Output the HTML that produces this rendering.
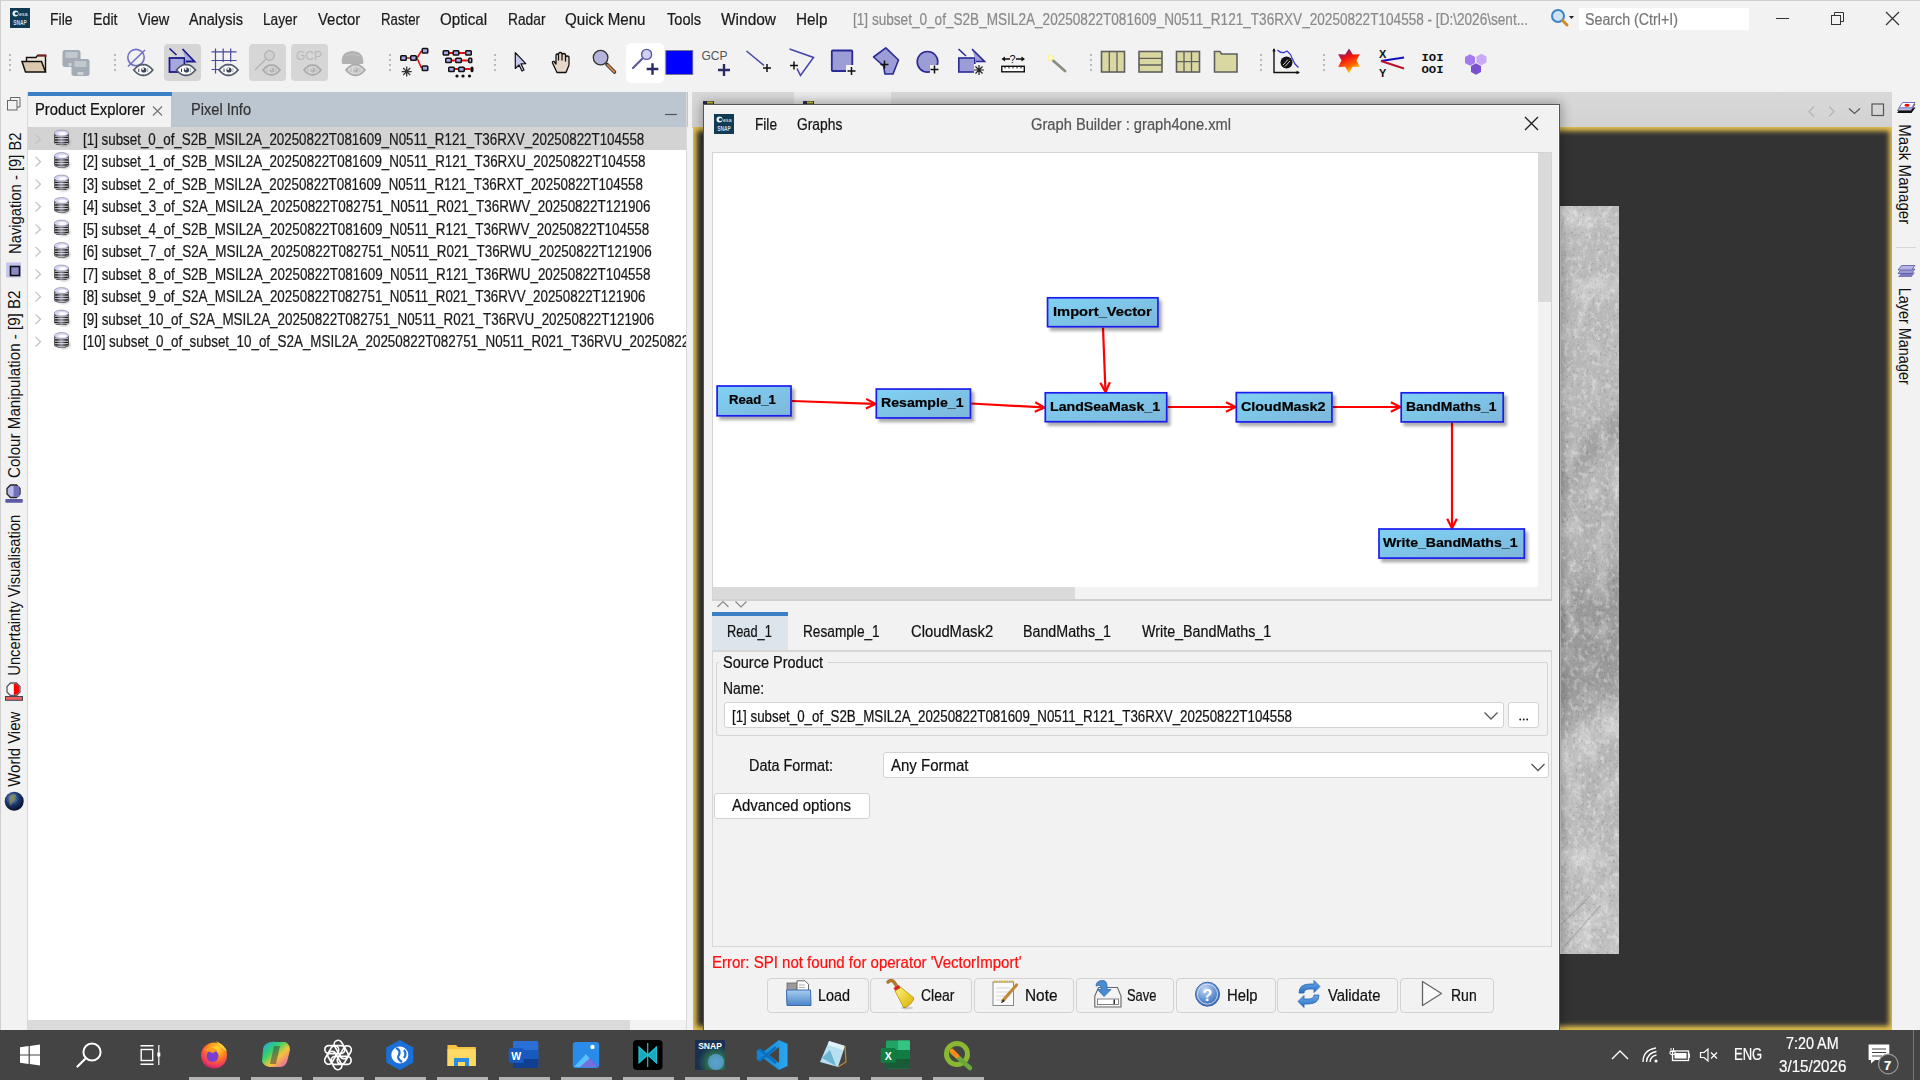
<!DOCTYPE html>
<html><head><meta charset="utf-8">
<style>
*{box-sizing:border-box;margin:0;padding:0}
html,body{width:1920px;height:1080px;overflow:hidden;background:#f2f2f2;font-family:"Liberation Sans",sans-serif;color:#000}
.a{position:absolute}
.t{position:absolute;white-space:pre}
svg.i{position:absolute;overflow:visible}
</style></head><body>
<div class="a" style="left:0px;top:0px;width:1920px;height:1px;background:#cfcfcf"></div><div class="a" style="left:0px;top:0px;width:1px;height:1030px;background:#cfcfcf"></div><svg class="i" style="left:10px;top:8px" width="20" height="20" viewBox="0 0 20 20">
<rect x="0" y="0" width="20" height="20" fill="#0f3b55"/>
<circle cx="5.5" cy="5.5" r="3" fill="#e8eef2"/><circle cx="6.5" cy="5.5" r="1.6" fill="#0f3b55"/>
<text x="9" y="7.6" font-family="Liberation Sans" font-weight="700" font-size="5.5" fill="#c8d4dc" textLength="8.5" lengthAdjust="spacingAndGlyphs">esa</text>
<text x="3.2" y="17" font-family="Liberation Sans" font-weight="700" font-size="6.5" fill="#cfd9e0" textLength="13.5" lengthAdjust="spacingAndGlyphs">SNAP</text>
</svg><div class="t" style="left:50px;top:12.00px;font-size:16px;line-height:16px;color:#1b1b1b;font-weight:400;font-family:'Liberation Sans',sans-serif;transform-origin:0 0;transform:scaleX(0.8727);-webkit-text-stroke:0.22px currentColor;">File</div><div class="t" style="left:92.5px;top:12.00px;font-size:16px;line-height:16px;color:#1b1b1b;font-weight:400;font-family:'Liberation Sans',sans-serif;transform-origin:0 0;transform:scaleX(0.8884);-webkit-text-stroke:0.22px currentColor;">Edit</div><div class="t" style="left:137.5px;top:12.00px;font-size:16px;line-height:16px;color:#1b1b1b;font-weight:400;font-family:'Liberation Sans',sans-serif;transform-origin:0 0;transform:scaleX(0.9072);-webkit-text-stroke:0.22px currentColor;">View</div><div class="t" style="left:188.6px;top:12.00px;font-size:16px;line-height:16px;color:#1b1b1b;font-weight:400;font-family:'Liberation Sans',sans-serif;transform-origin:0 0;transform:scaleX(0.9047);-webkit-text-stroke:0.22px currentColor;">Analysis</div><div class="t" style="left:262.8px;top:12.00px;font-size:16px;line-height:16px;color:#1b1b1b;font-weight:400;font-family:'Liberation Sans',sans-serif;transform-origin:0 0;transform:scaleX(0.8543);-webkit-text-stroke:0.22px currentColor;">Layer</div><div class="t" style="left:317.5px;top:12.00px;font-size:16px;line-height:16px;color:#1b1b1b;font-weight:400;font-family:'Liberation Sans',sans-serif;transform-origin:0 0;transform:scaleX(0.9303);-webkit-text-stroke:0.22px currentColor;">Vector</div><div class="t" style="left:380.8px;top:12.00px;font-size:16px;line-height:16px;color:#1b1b1b;font-weight:400;font-family:'Liberation Sans',sans-serif;transform-origin:0 0;transform:scaleX(0.8276);-webkit-text-stroke:0.22px currentColor;">Raster</div><div class="t" style="left:440px;top:12.00px;font-size:16px;line-height:16px;color:#1b1b1b;font-weight:400;font-family:'Liberation Sans',sans-serif;transform-origin:0 0;transform:scaleX(0.9438);-webkit-text-stroke:0.22px currentColor;">Optical</div><div class="t" style="left:507.5px;top:12.00px;font-size:16px;line-height:16px;color:#1b1b1b;font-weight:400;font-family:'Liberation Sans',sans-serif;transform-origin:0 0;transform:scaleX(0.8605);-webkit-text-stroke:0.22px currentColor;">Radar</div><div class="t" style="left:565px;top:12.00px;font-size:16px;line-height:16px;color:#1b1b1b;font-weight:400;font-family:'Liberation Sans',sans-serif;transform-origin:0 0;transform:scaleX(0.9429);-webkit-text-stroke:0.22px currentColor;">Quick Menu</div><div class="t" style="left:667px;top:12.00px;font-size:16px;line-height:16px;color:#1b1b1b;font-weight:400;font-family:'Liberation Sans',sans-serif;transform-origin:0 0;transform:scaleX(0.9101);-webkit-text-stroke:0.22px currentColor;">Tools</div><div class="t" style="left:721px;top:12.00px;font-size:16px;line-height:16px;color:#1b1b1b;font-weight:400;font-family:'Liberation Sans',sans-serif;transform-origin:0 0;transform:scaleX(0.9665);-webkit-text-stroke:0.22px currentColor;">Window</div><div class="t" style="left:796px;top:12.00px;font-size:16px;line-height:16px;color:#1b1b1b;font-weight:400;font-family:'Liberation Sans',sans-serif;transform-origin:0 0;transform:scaleX(0.9573);-webkit-text-stroke:0.22px currentColor;">Help</div><div class="t" style="left:852.5px;top:12.00px;font-size:16px;line-height:16px;color:#8a8a8a;font-weight:400;font-family:'Liberation Sans',sans-serif;transform-origin:0 0;transform:scaleX(0.8491);-webkit-text-stroke:0.22px currentColor;">[1] subset_0_of_S2B_MSIL2A_20250822T081609_N0511_R121_T36RXV_20250822T104558 - [D:\2026\sent...</div><svg class="i" style="left:1550px;top:8px" width="26" height="22" viewBox="0 0 26 22">
<circle cx="8" cy="8" r="6" fill="#cfe3f7" stroke="#3d83c9" stroke-width="2"/>
<path d="M12.5 12.5 L17 17" stroke="#d08a2a" stroke-width="3" stroke-linecap="round"/>
<path d="M19 8 L24 8 L21.5 11 Z" fill="#222"/></svg><div class="a" style="left:1579px;top:8px;width:170px;height:22px;background:#fff"></div><div class="t" style="left:1584.5px;top:12.00px;font-size:16px;line-height:16px;color:#777;font-weight:400;font-family:'Liberation Sans',sans-serif;transform-origin:0 0;transform:scaleX(0.8902);-webkit-text-stroke:0.22px currentColor;">Search (Ctrl+I)</div><div class="a" style="left:1776px;top:18px;width:13px;height:1px;background:#333"></div><svg class="i" style="left:1830px;top:11px" width="16" height="16" viewBox="0 0 16 16">
<rect x="1.5" y="4.5" width="9" height="9" fill="none" stroke="#333" stroke-width="1"/>
<path d="M4.5 4.5 V1.5 H13.5 V10.5 H10.5" fill="none" stroke="#333" stroke-width="1"/></svg><svg class="i" style="left:1885px;top:11px" width="16" height="16" viewBox="0 0 16 16">
<path d="M1 1 L14 14 M14 1 L1 14" stroke="#333" stroke-width="1.2"/></svg><div class="a" style="left:164px;top:44px;width:37px;height:37px;background:#d5d5d5;border-radius:4px"></div><div class="a" style="left:249px;top:44px;width:37px;height:37px;background:#d6d6d6;border-radius:4px"></div><div class="a" style="left:291px;top:44px;width:37px;height:37px;background:#d6d6d6;border-radius:4px"></div><div class="a" style="left:626px;top:42.5px;width:38px;height:40px;background:#fff;border-radius:5px"></div><svg class="i" style="left:0;top:0" width="1920" height="90" viewBox="0 0 1920 90"><circle cx="10" cy="55" r="1.1" fill="#ababab"/><circle cx="10" cy="60" r="1.1" fill="#ababab"/><circle cx="10" cy="65" r="1.1" fill="#ababab"/><circle cx="10" cy="70" r="1.1" fill="#ababab"/><circle cx="115" cy="55" r="1.1" fill="#ababab"/><circle cx="115" cy="60" r="1.1" fill="#ababab"/><circle cx="115" cy="65" r="1.1" fill="#ababab"/><circle cx="115" cy="70" r="1.1" fill="#ababab"/><circle cx="390" cy="55" r="1.1" fill="#ababab"/><circle cx="390" cy="60" r="1.1" fill="#ababab"/><circle cx="390" cy="65" r="1.1" fill="#ababab"/><circle cx="390" cy="70" r="1.1" fill="#ababab"/><circle cx="495" cy="55" r="1.1" fill="#ababab"/><circle cx="495" cy="60" r="1.1" fill="#ababab"/><circle cx="495" cy="65" r="1.1" fill="#ababab"/><circle cx="495" cy="70" r="1.1" fill="#ababab"/><circle cx="1091" cy="55" r="1.1" fill="#ababab"/><circle cx="1091" cy="60" r="1.1" fill="#ababab"/><circle cx="1091" cy="65" r="1.1" fill="#ababab"/><circle cx="1091" cy="70" r="1.1" fill="#ababab"/><circle cx="1261" cy="55" r="1.1" fill="#ababab"/><circle cx="1261" cy="60" r="1.1" fill="#ababab"/><circle cx="1261" cy="65" r="1.1" fill="#ababab"/><circle cx="1261" cy="70" r="1.1" fill="#ababab"/><circle cx="1324" cy="55" r="1.1" fill="#ababab"/><circle cx="1324" cy="60" r="1.1" fill="#ababab"/><circle cx="1324" cy="65" r="1.1" fill="#ababab"/><circle cx="1324" cy="70" r="1.1" fill="#ababab"/><path d="M26.5 63 V57.5 H36 L37.5 55.5 H45.5 V72" fill="#f0e6d8" stroke="#111" stroke-width="1.4"/><path d="M37.5 55.5 H45.5 V57" stroke="#7a2020" stroke-width="1.8" fill="none"/><path d="M22 61.5 H41.5 L45.5 72 H25.5 Z" fill="#dcc8ac" stroke="#111" stroke-width="1.5"/><rect x="62.5" y="50" width="18" height="17" rx="2.5" fill="#a3acb6"/><rect x="65.5" y="52" width="12" height="6" fill="#c2c8ce"/><rect x="68.5" y="63" width="6" height="3" fill="#cdd2d7"/><rect x="71.5" y="59" width="18" height="17" rx="2.5" fill="#a3acb6"/><rect x="74.5" y="61" width="12" height="6" fill="#c2c8ce"/><rect x="77.5" y="72" width="6" height="3" fill="#cdd2d7"/><circle cx="136" cy="57.6" r="8.2" fill="none" stroke="#7070c0" stroke-width="1.6"/><path d="M128 66.5 L145 50" stroke="#7070c0" stroke-width="1.6"/><path d="M133.8 70 Q139.025 63.9625 143.3 64.75 Q147.57500000000002 63.9625 152.8 70 Q147.57500000000002 76.0375 143.3 75.25 Q139.025 76.0375 133.8 70 Z" fill="#fff" stroke="#515b6b" stroke-width="1.8"/><circle cx="143.8" cy="70" r="2.6" fill="#3b4454"/><circle cx="143.0" cy="69.1" r="1" fill="#fff"/><path d="M138.8 68.5 V72" stroke="#3b4454" stroke-width="1"/><path d="M147.5 68 Q148.5 70 147.5 72" stroke="#9aa" stroke-width="1" fill="none"/><path d="M169.5 48.5 L176.5 55" stroke="#1a1a8a" stroke-width="1.6"/><rect x="169.5" y="58" width="15" height="14" fill="#a8a8e0" stroke="#1a1a8a" stroke-width="1.8"/><path d="M182.5 49 L194.5 61.5 L186 61.5" fill="#a8a8e0" stroke="#1a1a8a" stroke-width="1.8"/><path d="M176.5 70 Q181.725 63.9625 186 64.75 Q190.275 63.9625 195.5 70 Q190.275 76.0375 186 75.25 Q181.725 76.0375 176.5 70 Z" fill="#fff" stroke="#515b6b" stroke-width="1.8"/><circle cx="186.5" cy="70" r="2.6" fill="#3b4454"/><circle cx="185.7" cy="69.1" r="1" fill="#fff"/><path d="M181.5 68.5 V72" stroke="#3b4454" stroke-width="1"/><path d="M190.2 68 Q191.2 70 190.2 72" stroke="#9aa" stroke-width="1" fill="none"/><path d="M215.5 48.5 V73.5 M223.2 48.5 V62 M230.7 48.5 V62 M211.5 51.8 H236.5 M211.5 60.5 H236.5 M211.5 69.5 H219" stroke="#4a4a9a" stroke-width="1.2"/><path d="M219.0 70 Q224.225 63.9625 228.5 64.75 Q232.775 63.9625 238.0 70 Q232.775 76.0375 228.5 75.25 Q224.225 76.0375 219.0 70 Z" fill="#fff" stroke="#515b6b" stroke-width="1.8"/><circle cx="229.0" cy="70" r="2.6" fill="#3b4454"/><circle cx="228.2" cy="69.1" r="1" fill="#fff"/><path d="M224.0 68.5 V72" stroke="#3b4454" stroke-width="1"/><path d="M232.7 68 Q233.7 70 232.7 72" stroke="#9aa" stroke-width="1" fill="none"/><circle cx="269.5" cy="55.5" r="4.8" fill="#cfcfcf" stroke="#b0b0b0" stroke-width="1.2"/><path d="M265.5 59.5 L255 70" stroke="#b3b3b3" stroke-width="1.4"/><path d="M263.0 70 Q267.675 64.5375 271.5 65.25 Q275.325 64.5375 280.0 70 Q275.325 75.4625 271.5 74.75 Q267.675 75.4625 263.0 70 Z" fill="#d6d6d6" stroke="#a9a9a9" stroke-width="1.8"/><circle cx="272.0" cy="70" r="2.6" fill="#b5b5b5"/><circle cx="271.2" cy="69.1" r="1" fill="#d6d6d6"/><path d="M267.0 68.5 V72" stroke="#b5b5b5" stroke-width="1"/><path d="M275.7 68 Q276.7 70 275.7 72" stroke="#bbb" stroke-width="1" fill="none"/><text x="296" y="60" font-family="Liberation Sans" font-size="12" fill="#b8b8b8">GCP</text><path d="M304.0 70 Q308.675 64.5375 312.5 65.25 Q316.325 64.5375 321.0 70 Q316.325 75.4625 312.5 74.75 Q308.675 75.4625 304.0 70 Z" fill="#d6d6d6" stroke="#a9a9a9" stroke-width="1.8"/><circle cx="313.0" cy="70" r="2.6" fill="#b5b5b5"/><circle cx="312.2" cy="69.1" r="1" fill="#d6d6d6"/><path d="M308.0 68.5 V72" stroke="#b5b5b5" stroke-width="1"/><path d="M316.7 68 Q317.7 70 316.7 72" stroke="#bbb" stroke-width="1" fill="none"/><path d="M342 64 Q340 52 352 51 Q363 51 363.5 62 L363 64 Z" fill="#b2b2b2"/><path d="M346 56 Q352 53 360 56" stroke="#c5c5c5" stroke-width="1.2" fill="none"/><path d="M346.0 70 Q351.225 63.9625 355.5 64.75 Q359.775 63.9625 365.0 70 Q359.775 76.0375 355.5 75.25 Q351.225 76.0375 346.0 70 Z" fill="#d6d6d6" stroke="#a9a9a9" stroke-width="1.8"/><circle cx="356.0" cy="70" r="2.6" fill="#b5b5b5"/><circle cx="355.2" cy="69.1" r="1" fill="#d6d6d6"/><path d="M351.0 68.5 V72" stroke="#b5b5b5" stroke-width="1"/><path d="M359.7 68 Q360.7 70 359.7 72" stroke="#bbb" stroke-width="1" fill="none"/><path d="M407 58 H410 M417 58 L421.5 50.8 M417 58 L421.5 68" stroke="#e01010" stroke-width="1.6"/><rect x="400.75" y="55.75" width="5.5" height="4.5" fill="#a9a9e6" stroke="#111" stroke-width="1.5" rx="0.8"/><rect x="410.75" y="55.75" width="5.5" height="4.5" fill="#a9a9e6" stroke="#111" stroke-width="1.5" rx="0.8"/><rect x="422.25" y="48.55" width="5.5" height="4.5" fill="#a9a9e6" stroke="#111" stroke-width="1.5" rx="0.8"/><rect x="422.25" y="65.95" width="5.5" height="4.5" fill="#a9a9e6" stroke="#111" stroke-width="1.5" rx="0.8"/><path d="M401.70 71.60 L411.70 71.60 M403.16 68.06 L410.24 75.14 M406.70 66.60 L406.70 76.60 M410.24 68.06 L403.16 75.14 " stroke="#333" stroke-width="1.3"/><path d="M449 53 H465 M452 60.5 H468 M455 69 H470.5" stroke="#e01010" stroke-width="2"/><rect x="443.25" y="50.75" width="5.5" height="4.3" fill="#a9a9e6" stroke="#111" stroke-width="1.5" rx="0.8"/><rect x="453.25" y="50.75" width="5.5" height="4.3" fill="#a9a9e6" stroke="#111" stroke-width="1.5" rx="0.8"/><rect x="465.75" y="50.75" width="5.5" height="4.3" fill="#a9a9e6" stroke="#111" stroke-width="1.5" rx="0.8"/><rect x="445.75" y="58.25" width="5.5" height="4.3" fill="#a9a9e6" stroke="#111" stroke-width="1.5" rx="0.8"/><rect x="455.75" y="58.25" width="5.5" height="4.3" fill="#a9a9e6" stroke="#111" stroke-width="1.5" rx="0.8"/><rect x="468.75" y="58.25" width="3.0" height="4.3" fill="#a9a9e6" stroke="#111" stroke-width="1.5" rx="0.8"/><rect x="448.75" y="67.25" width="5.5" height="4.3" fill="#a9a9e6" stroke="#111" stroke-width="1.5" rx="0.8"/><rect x="458.75" y="67.25" width="5.5" height="4.3" fill="#a9a9e6" stroke="#111" stroke-width="1.5" rx="0.8"/><rect x="471.25" y="67.25" width="1.5" height="4.3" fill="#a9a9e6" stroke="#111" stroke-width="1.5" rx="0.8"/><circle cx="457" cy="76" r="1.6" fill="#111"/><circle cx="463" cy="76" r="1.6" fill="#111"/><circle cx="469.5" cy="76" r="1.6" fill="#111"/><path d="M515.3 52.6 V68.5 L519 65 L522 71 L524 70 L521 63.8 L525.8 63.6 Z" fill="#c8c8f0" stroke="#111" stroke-width="1.2" stroke-linejoin="round"/><path d="M557 72.5 L552.5 63 Q552 61 554 61.5 L556 64 V55 Q557 53 558.5 55 V60 V53.5 Q560.5 51.5 562 53.5 V60 V54.5 Q564 52.5 565.5 54.5 V61 V57 Q567.5 55 569 57 L569 65 L566 72.5 Z" fill="#e6d7c8" stroke="#111" stroke-width="1.3" stroke-linejoin="round"/><path d="M607 64.5 L614.5 72" stroke="#333" stroke-width="3.6" stroke-linecap="round"/><path d="M607.5 65 L614.3 71.8" stroke="#d0874a" stroke-width="2" stroke-linecap="round"/><circle cx="600.6" cy="57.6" r="7.3" fill="#b4b4dc" stroke="#333" stroke-width="1.3"/><path d="M642 59 L633 68" stroke="#5a5a9a" stroke-width="2.2" stroke-linecap="round"/><circle cx="646.6" cy="54.4" r="5" fill="#cfcff8" stroke="#5a5aa0" stroke-width="1.4"/><path d="M646.7 69 H658.3 M652.5 63.2 V74.8" stroke="#2a2a66" stroke-width="2.4"/><rect x="665.8" y="50.5" width="27" height="24" fill="#0000ff" stroke="#777" stroke-width="0.8"/><text x="701.5" y="59.8" font-family="Liberation Sans" font-size="12" fill="#555">GCP</text><path d="M718 70 H730 M724 64 V76" stroke="#2a2a66" stroke-width="2.4"/><path d="M746.5 51 L764 65.5" stroke="#4848a8" stroke-width="1.6"/><path d="M763 68 H771 M767 64 V72" stroke="#111" stroke-width="1.5"/><path d="M789.5 49 L813.5 57.5 L800.5 75.5 L797 68.5" stroke="#4848a8" stroke-width="1.6" fill="none"/><path d="M790 65.5 H798 M794 61.5 V69.5" stroke="#111" stroke-width="1.5"/><rect x="831.8" y="50.5" width="20.5" height="20.5" rx="1" fill="#9c9cd6" stroke="#2a2a96" stroke-width="1.8"/><rect x="846" y="65" width="10" height="10" fill="#f2f2f2"/><path d="M847.5 71 H855.5 M851.5 67 V75" stroke="#111" stroke-width="1.5"/><path d="M873.5 57 L885.8 47.8 L898.5 60 L893 74 L885 74 L883.5 66 Z" fill="#9c9cd6" stroke="#2a2a96" stroke-width="1.6" stroke-linejoin="round"/><path d="M880.5 64.5 H888.5 M884.5 60.5 V68.5" stroke="#111" stroke-width="1.5"/><circle cx="927.5" cy="61.8" r="10.3" fill="#9c9cd6" stroke="#2a2a96" stroke-width="1.6"/><rect x="930" y="65" width="10" height="10" fill="#f2f2f2"/><path d="M930.5 69.5 H938.5 M934.5 65.5 V73.5" stroke="#111" stroke-width="1.5"/><path d="M958.5 49 L966 56" stroke="#2a2a96" stroke-width="1.6"/><rect x="958.8" y="58" width="16" height="14" fill="#9c9cd6" stroke="#2a2a96" stroke-width="1.6"/><path d="M972 49 L984.5 61.5 L976 61.5" fill="#9c9cd6" stroke="#2a2a96" stroke-width="1.6"/><rect x="974" y="64" width="11" height="12" fill="#f2f2f2"/><path d="M974.00 70.00 L984.00 70.00 M975.46 66.46 L982.54 73.54 M979.00 65.00 L979.00 75.00 M982.54 66.46 L975.46 73.54 " stroke="#222" stroke-width="1.2"/><path d="M1003 59 H1010 M1016 59 H1023.5" stroke="#111" stroke-width="1.4"/><path d="M1001.5 59 L1005 56.5 V61.5 Z M1025 59 L1021.5 56.5 V61.5 Z" fill="#111"/><text x="1009.5" y="62.5" font-family="Liberation Sans" font-size="11" fill="#111">?</text><rect x="1001.8" y="66.3" width="22.5" height="5.5" fill="#fff" stroke="#111" stroke-width="1.4"/><path d="M1005 66.5 V68.5 M1009 66.5 V68.5 M1013 66.5 V68.5 M1017 66.5 V68.5 M1021 66.5 V68.5" stroke="#111" stroke-width="1"/><path d="M1053 60.5 L1065 71" stroke="#8a9080" stroke-width="2.8" stroke-linecap="round"/><circle cx="1050.5" cy="58" r="3.2" fill="#fff38a" opacity=".8"/><circle cx="1050.5" cy="58" r="1.5" fill="#fffbe0"/><rect x="1101.5" y="51.5" width="23" height="20.5" fill="#dad8a2" stroke="#5f5f5f" stroke-width="1.6"/><path d="M1109.3 51.5 V72 M1117 51.5 V72" stroke="#5f5f5f" stroke-width="1.3"/><rect x="1139" y="51.5" width="23" height="20.5" fill="#dad8a2" stroke="#5f5f5f" stroke-width="1.6"/><path d="M1139 58.3 H1162 M1139 65 H1162" stroke="#5f5f5f" stroke-width="1.3"/><rect x="1176.5" y="51.5" width="23" height="20.5" fill="#dad8a2" stroke="#5f5f5f" stroke-width="1.6"/><path d="M1184 51.5 V72 M1191.5 51.5 V72 M1176.5 61.7 H1199.5" stroke="#5f5f5f" stroke-width="1.3"/><path d="M1214.5 72 V51.5 H1220 L1221.5 54 H1237 V72 Z" fill="#dad8a2" stroke="#5f5f5f" stroke-width="1.6"/><path d="M1274 49 V72.5 H1299" stroke="#111" stroke-width="1.4" fill="none"/><path d="M1274 48 L1272.3 51.5 H1275.7 Z M1300 72.5 L1296.5 70.8 V74.2 Z" fill="#111"/><path d="M1277.5 50 Q1280 53 1284 52.5 L1287 51 Q1291 54 1292 58 L1295 64 L1298.5 67.5" stroke="#3a3ad0" stroke-width="1.3" fill="none"/><circle cx="1286.5" cy="62.5" r="6" fill="#111"/><path d="M1283 65 L1288 59.5 M1285 66.5 L1290 61" stroke="#ccc" stroke-width="1"/><defs><linearGradient id="stg" x1="0" y1="0" x2="0.4" y2="1"><stop offset="0" stop-color="#3020c0"/><stop offset=".45" stop-color="#f01010"/><stop offset=".8" stop-color="#ff6a00"/><stop offset="1" stop-color="#f0d020"/></linearGradient></defs><path d="M1349 48.5 L1352.8 54.5 L1359.8 54.2 L1356.5 60.5 L1359.8 67 L1352.8 66.7 L1349 73.5 L1345.2 66.7 L1338.2 67 L1341.5 60.5 L1338.2 54.2 L1345.2 54.5 Z" fill="url(#stg)"/><text x="1379" y="58" font-family="Liberation Sans" font-size="11" font-weight="700" fill="#111">X</text><text x="1379" y="76.5" font-family="Liberation Sans" font-size="11" font-weight="700" fill="#111">Y</text><path d="M1381 61 L1404 57.5" stroke="#1010c0" stroke-width="2"/><path d="M1381 61 L1404 68.5" stroke="#c01030" stroke-width="2"/><text x="1421.5" y="61" font-family="Liberation Mono" font-size="10.5" font-weight="700" fill="#111" textLength="22" lengthAdjust="spacingAndGlyphs">IOI</text><text x="1421.5" y="73" font-family="Liberation Mono" font-size="10.5" font-weight="700" fill="#111" textLength="22" lengthAdjust="spacingAndGlyphs">OOI</text><polygon points="1475.02,62.90 1470.00,65.80 1464.98,62.90 1464.98,57.10 1470.00,54.20 1475.02,57.10" fill="#a47af0"/><polygon points="1486.52,62.40 1481.50,65.30 1476.48,62.40 1476.48,56.60 1481.50,53.70 1486.52,56.60" fill="#c9aaf6"/><polygon points="1481.02,71.90 1476.00,74.80 1470.98,71.90 1470.98,66.10 1476.00,63.20 1481.02,66.10" fill="#7a4fd0"/></svg><div class="a" style="left:27px;top:92px;width:1px;height:938px;background:#d9d9d9"></div><svg class="i" style="left:0;top:0" width="28" height="1030" viewBox="0 0 28 1030">
<rect x="7.5" y="100.5" width="9.5" height="9.5" fill="#f2f2f2" stroke="#666" stroke-width="1"/>
<path d="M10.5 100.5 V97.5 H20 V107 H17" fill="none" stroke="#666" stroke-width="1"/>
<rect x="6.2" y="262.5" width="14.8" height="15" fill="#c4c4ee"/>
<rect x="10.5" y="266.5" width="9" height="9" fill="#8a8ac8" stroke="#111" stroke-width="1.6"/>
<polygon points="10.5,485 16.5,485 20,488.5 20,494 16.5,497.5 10.5,497.5 7,494 7,488.5" fill="#b8b8ec" stroke="#222" stroke-width="1.3"/>
<path d="M13.6 486 V497" stroke="#6a6ab0" stroke-width="0"/><rect x="13.6" y="486" width="5.8" height="11" fill="#7070b8"/>
<rect x="5.3" y="499" width="17.5" height="3.8" fill="#5a5aa8" rx="1"/>
<polygon points="10.5,683 16.5,683 20,686.5 20,692 16.5,695.5 10.5,695.5 7,692 7,686.5" fill="#fff" stroke="#556" stroke-width="1.3"/>
<path d="M13.8 683.8 H16.3 L19.3 686.8 V691.8 L16.3 694.8 H13.8 Z" fill="#f00"/>
<rect x="5.5" y="696.5" width="17" height="3.8" fill="#f06060" stroke="#445" stroke-width="1"/>
<defs><radialGradient id="glb" cx=".4" cy=".35" r=".7"><stop offset="0" stop-color="#7aa0d0"/><stop offset=".5" stop-color="#1c3870"/><stop offset="1" stop-color="#050a20"/></radialGradient></defs>
<circle cx="14.2" cy="801.2" r="9.5" fill="url(#glb)"/>
<path d="M9 797 Q12 793 16 795 L15 800 Q12 803 10 806 Z" fill="#8a8a50" opacity=".75"/>
</svg><div class="t" style="left:-51.31px;top:186.06px;font-size:16px;line-height:16px;color:#111;font-weight:400;font-family:'Liberation Sans',sans-serif;transform-origin:65.81px 7.24px;transform:rotate(-90deg) scaleX(0.9223);">Navigation - [9] B2</div><div class="t" style="left:-84.66px;top:376.51px;font-size:16px;line-height:16px;color:#111;font-weight:400;font-family:'Liberation Sans',sans-serif;transform-origin:99.16px 7.24px;transform:rotate(-90deg) scaleX(0.9454);">Colour Manipulation - [9] B2</div><div class="t" style="left:-72.95px;top:588.26px;font-size:16px;line-height:16px;color:#111;font-weight:400;font-family:'Liberation Sans',sans-serif;transform-origin:87.45px 7.24px;transform:rotate(-90deg) scaleX(0.9205);">Uncertainty Visualisation</div><div class="t" style="left:-25.66px;top:741.76px;font-size:16px;line-height:16px;color:#111;font-weight:400;font-family:'Liberation Sans',sans-serif;transform-origin:40.16px 7.24px;transform:rotate(-90deg) scaleX(0.9337);">World View</div><div class="a" style="left:28px;top:92px;width:659.5px;height:35px;background:#bcc6d1"></div><div class="a" style="left:28px;top:92px;width:144px;height:4px;background:#3b7fc7"></div><div class="a" style="left:28px;top:96px;width:143px;height:31px;background:#f2f2f2"></div><div class="t" style="left:35px;top:102.00px;font-size:16px;line-height:16px;color:#111;font-weight:400;font-family:'Liberation Sans',sans-serif;transform-origin:0 0;transform:scaleX(0.9230);-webkit-text-stroke:0.22px currentColor;">Product Explorer</div><svg class="i" style="left:0;top:0" width="700" height="130" viewBox="0 0 700 130"><path d="M153 106.5 L162 115.5 M162 106.5 L153 115.5" stroke="#777" stroke-width="1.3"/><path d="M665 114.5 H677" stroke="#555" stroke-width="1.2"/></svg><div class="t" style="left:190.6px;top:102.00px;font-size:16px;line-height:16px;color:#333;font-weight:400;font-family:'Liberation Sans',sans-serif;transform-origin:0 0;transform:scaleX(0.9117);-webkit-text-stroke:0.22px currentColor;">Pixel Info</div><div class="a" style="left:28px;top:127px;width:658px;height:893px;background:#fff"></div><div class="a" style="left:28px;top:127px;width:658px;height:22.5px;background:#d3d3d3"></div><svg class="i" style="left:0;top:0" width="700" height="400" viewBox="0 0 700 400"><defs><filter id="dsh"><feGaussianBlur stdDeviation="1.1"/></filter><linearGradient id="dmid" x1="0" y1="0" x2="1" y2="0"><stop offset="0" stop-color="#444"/><stop offset=".5" stop-color="#8a8a9a"/><stop offset="1" stop-color="#333"/></linearGradient></defs><path d="M35.5 134.39999999999998 L40.5 139.2 L35.5 144.0" fill="none" stroke="#c4c4c4" stroke-width="1.3"/><g transform="translate(54,129.89999999999998)"><ellipse cx="10" cy="12" rx="6.5" ry="4.5" fill="#000" opacity=".22" filter="url(#dsh)"/><path d="M0.3 3.5 V12.5 Q0.3 15.2 7.5 15.2 Q14.7 15.2 14.7 12.5 V3.5 Z" fill="#1c1c1c"/><rect x="3.5" y="5" width="8" height="9.5" fill="url(#dmid)"/><path d="M1 6.3 H14 M1 8.8 H14 M1 11.3 H14" stroke="#f4f4ff" stroke-width="0.9"/><path d="M1 13.5 Q7.5 15 14 13.5" stroke="#d8d8e8" stroke-width="0.8" fill="none"/><ellipse cx="7.5" cy="3.3" rx="7.1" ry="3.1" fill="#d6d6f4" stroke="#8a8a9a" stroke-width=".7"/><ellipse cx="8.5" cy="3.6" rx="4" ry="1.5" fill="#fff" opacity=".9"/></g><path d="M35.5 156.89999999999998 L40.5 161.7 L35.5 166.5" fill="none" stroke="#c4c4c4" stroke-width="1.3"/><g transform="translate(54,152.39999999999998)"><ellipse cx="10" cy="12" rx="6.5" ry="4.5" fill="#000" opacity=".22" filter="url(#dsh)"/><path d="M0.3 3.5 V12.5 Q0.3 15.2 7.5 15.2 Q14.7 15.2 14.7 12.5 V3.5 Z" fill="#1c1c1c"/><rect x="3.5" y="5" width="8" height="9.5" fill="url(#dmid)"/><path d="M1 6.3 H14 M1 8.8 H14 M1 11.3 H14" stroke="#f4f4ff" stroke-width="0.9"/><path d="M1 13.5 Q7.5 15 14 13.5" stroke="#d8d8e8" stroke-width="0.8" fill="none"/><ellipse cx="7.5" cy="3.3" rx="7.1" ry="3.1" fill="#d6d6f4" stroke="#8a8a9a" stroke-width=".7"/><ellipse cx="8.5" cy="3.6" rx="4" ry="1.5" fill="#fff" opacity=".9"/></g><path d="M35.5 179.39999999999998 L40.5 184.2 L35.5 189.0" fill="none" stroke="#c4c4c4" stroke-width="1.3"/><g transform="translate(54,174.89999999999998)"><ellipse cx="10" cy="12" rx="6.5" ry="4.5" fill="#000" opacity=".22" filter="url(#dsh)"/><path d="M0.3 3.5 V12.5 Q0.3 15.2 7.5 15.2 Q14.7 15.2 14.7 12.5 V3.5 Z" fill="#1c1c1c"/><rect x="3.5" y="5" width="8" height="9.5" fill="url(#dmid)"/><path d="M1 6.3 H14 M1 8.8 H14 M1 11.3 H14" stroke="#f4f4ff" stroke-width="0.9"/><path d="M1 13.5 Q7.5 15 14 13.5" stroke="#d8d8e8" stroke-width="0.8" fill="none"/><ellipse cx="7.5" cy="3.3" rx="7.1" ry="3.1" fill="#d6d6f4" stroke="#8a8a9a" stroke-width=".7"/><ellipse cx="8.5" cy="3.6" rx="4" ry="1.5" fill="#fff" opacity=".9"/></g><path d="M35.5 201.89999999999998 L40.5 206.7 L35.5 211.5" fill="none" stroke="#c4c4c4" stroke-width="1.3"/><g transform="translate(54,197.39999999999998)"><ellipse cx="10" cy="12" rx="6.5" ry="4.5" fill="#000" opacity=".22" filter="url(#dsh)"/><path d="M0.3 3.5 V12.5 Q0.3 15.2 7.5 15.2 Q14.7 15.2 14.7 12.5 V3.5 Z" fill="#1c1c1c"/><rect x="3.5" y="5" width="8" height="9.5" fill="url(#dmid)"/><path d="M1 6.3 H14 M1 8.8 H14 M1 11.3 H14" stroke="#f4f4ff" stroke-width="0.9"/><path d="M1 13.5 Q7.5 15 14 13.5" stroke="#d8d8e8" stroke-width="0.8" fill="none"/><ellipse cx="7.5" cy="3.3" rx="7.1" ry="3.1" fill="#d6d6f4" stroke="#8a8a9a" stroke-width=".7"/><ellipse cx="8.5" cy="3.6" rx="4" ry="1.5" fill="#fff" opacity=".9"/></g><path d="M35.5 224.39999999999998 L40.5 229.2 L35.5 234.0" fill="none" stroke="#c4c4c4" stroke-width="1.3"/><g transform="translate(54,219.89999999999998)"><ellipse cx="10" cy="12" rx="6.5" ry="4.5" fill="#000" opacity=".22" filter="url(#dsh)"/><path d="M0.3 3.5 V12.5 Q0.3 15.2 7.5 15.2 Q14.7 15.2 14.7 12.5 V3.5 Z" fill="#1c1c1c"/><rect x="3.5" y="5" width="8" height="9.5" fill="url(#dmid)"/><path d="M1 6.3 H14 M1 8.8 H14 M1 11.3 H14" stroke="#f4f4ff" stroke-width="0.9"/><path d="M1 13.5 Q7.5 15 14 13.5" stroke="#d8d8e8" stroke-width="0.8" fill="none"/><ellipse cx="7.5" cy="3.3" rx="7.1" ry="3.1" fill="#d6d6f4" stroke="#8a8a9a" stroke-width=".7"/><ellipse cx="8.5" cy="3.6" rx="4" ry="1.5" fill="#fff" opacity=".9"/></g><path d="M35.5 246.89999999999998 L40.5 251.7 L35.5 256.5" fill="none" stroke="#c4c4c4" stroke-width="1.3"/><g transform="translate(54,242.39999999999998)"><ellipse cx="10" cy="12" rx="6.5" ry="4.5" fill="#000" opacity=".22" filter="url(#dsh)"/><path d="M0.3 3.5 V12.5 Q0.3 15.2 7.5 15.2 Q14.7 15.2 14.7 12.5 V3.5 Z" fill="#1c1c1c"/><rect x="3.5" y="5" width="8" height="9.5" fill="url(#dmid)"/><path d="M1 6.3 H14 M1 8.8 H14 M1 11.3 H14" stroke="#f4f4ff" stroke-width="0.9"/><path d="M1 13.5 Q7.5 15 14 13.5" stroke="#d8d8e8" stroke-width="0.8" fill="none"/><ellipse cx="7.5" cy="3.3" rx="7.1" ry="3.1" fill="#d6d6f4" stroke="#8a8a9a" stroke-width=".7"/><ellipse cx="8.5" cy="3.6" rx="4" ry="1.5" fill="#fff" opacity=".9"/></g><path d="M35.5 269.4 L40.5 274.2 L35.5 279.0" fill="none" stroke="#c4c4c4" stroke-width="1.3"/><g transform="translate(54,264.9)"><ellipse cx="10" cy="12" rx="6.5" ry="4.5" fill="#000" opacity=".22" filter="url(#dsh)"/><path d="M0.3 3.5 V12.5 Q0.3 15.2 7.5 15.2 Q14.7 15.2 14.7 12.5 V3.5 Z" fill="#1c1c1c"/><rect x="3.5" y="5" width="8" height="9.5" fill="url(#dmid)"/><path d="M1 6.3 H14 M1 8.8 H14 M1 11.3 H14" stroke="#f4f4ff" stroke-width="0.9"/><path d="M1 13.5 Q7.5 15 14 13.5" stroke="#d8d8e8" stroke-width="0.8" fill="none"/><ellipse cx="7.5" cy="3.3" rx="7.1" ry="3.1" fill="#d6d6f4" stroke="#8a8a9a" stroke-width=".7"/><ellipse cx="8.5" cy="3.6" rx="4" ry="1.5" fill="#fff" opacity=".9"/></g><path d="M35.5 291.9 L40.5 296.7 L35.5 301.5" fill="none" stroke="#c4c4c4" stroke-width="1.3"/><g transform="translate(54,287.4)"><ellipse cx="10" cy="12" rx="6.5" ry="4.5" fill="#000" opacity=".22" filter="url(#dsh)"/><path d="M0.3 3.5 V12.5 Q0.3 15.2 7.5 15.2 Q14.7 15.2 14.7 12.5 V3.5 Z" fill="#1c1c1c"/><rect x="3.5" y="5" width="8" height="9.5" fill="url(#dmid)"/><path d="M1 6.3 H14 M1 8.8 H14 M1 11.3 H14" stroke="#f4f4ff" stroke-width="0.9"/><path d="M1 13.5 Q7.5 15 14 13.5" stroke="#d8d8e8" stroke-width="0.8" fill="none"/><ellipse cx="7.5" cy="3.3" rx="7.1" ry="3.1" fill="#d6d6f4" stroke="#8a8a9a" stroke-width=".7"/><ellipse cx="8.5" cy="3.6" rx="4" ry="1.5" fill="#fff" opacity=".9"/></g><path d="M35.5 314.4 L40.5 319.2 L35.5 324.0" fill="none" stroke="#c4c4c4" stroke-width="1.3"/><g transform="translate(54,309.9)"><ellipse cx="10" cy="12" rx="6.5" ry="4.5" fill="#000" opacity=".22" filter="url(#dsh)"/><path d="M0.3 3.5 V12.5 Q0.3 15.2 7.5 15.2 Q14.7 15.2 14.7 12.5 V3.5 Z" fill="#1c1c1c"/><rect x="3.5" y="5" width="8" height="9.5" fill="url(#dmid)"/><path d="M1 6.3 H14 M1 8.8 H14 M1 11.3 H14" stroke="#f4f4ff" stroke-width="0.9"/><path d="M1 13.5 Q7.5 15 14 13.5" stroke="#d8d8e8" stroke-width="0.8" fill="none"/><ellipse cx="7.5" cy="3.3" rx="7.1" ry="3.1" fill="#d6d6f4" stroke="#8a8a9a" stroke-width=".7"/><ellipse cx="8.5" cy="3.6" rx="4" ry="1.5" fill="#fff" opacity=".9"/></g><path d="M35.5 336.9 L40.5 341.7 L35.5 346.5" fill="none" stroke="#c4c4c4" stroke-width="1.3"/><g transform="translate(54,332.4)"><ellipse cx="10" cy="12" rx="6.5" ry="4.5" fill="#000" opacity=".22" filter="url(#dsh)"/><path d="M0.3 3.5 V12.5 Q0.3 15.2 7.5 15.2 Q14.7 15.2 14.7 12.5 V3.5 Z" fill="#1c1c1c"/><rect x="3.5" y="5" width="8" height="9.5" fill="url(#dmid)"/><path d="M1 6.3 H14 M1 8.8 H14 M1 11.3 H14" stroke="#f4f4ff" stroke-width="0.9"/><path d="M1 13.5 Q7.5 15 14 13.5" stroke="#d8d8e8" stroke-width="0.8" fill="none"/><ellipse cx="7.5" cy="3.3" rx="7.1" ry="3.1" fill="#d6d6f4" stroke="#8a8a9a" stroke-width=".7"/><ellipse cx="8.5" cy="3.6" rx="4" ry="1.5" fill="#fff" opacity=".9"/></g></svg><div class="t" style="left:82.5px;top:132.00px;font-size:16px;line-height:16px;color:#1a1a1a;font-weight:400;font-family:'Liberation Sans',sans-serif;transform-origin:0 0;transform:scaleX(0.8349);-webkit-text-stroke:0.22px currentColor;">[1] subset_0_of_S2B_MSIL2A_20250822T081609_N0511_R121_T36RXV_20250822T104558</div><div class="t" style="left:82.5px;top:154.00px;font-size:16px;line-height:16px;color:#1a1a1a;font-weight:400;font-family:'Liberation Sans',sans-serif;transform-origin:0 0;transform:scaleX(0.8357);-webkit-text-stroke:0.22px currentColor;">[2] subset_1_of_S2B_MSIL2A_20250822T081609_N0511_R121_T36RXU_20250822T104558</div><div class="t" style="left:82.5px;top:177.00px;font-size:16px;line-height:16px;color:#1a1a1a;font-weight:400;font-family:'Liberation Sans',sans-serif;transform-origin:0 0;transform:scaleX(0.8341);-webkit-text-stroke:0.22px currentColor;">[3] subset_2_of_S2B_MSIL2A_20250822T081609_N0511_R121_T36RXT_20250822T104558</div><div class="t" style="left:82.5px;top:199.00px;font-size:16px;line-height:16px;color:#1a1a1a;font-weight:400;font-family:'Liberation Sans',sans-serif;transform-origin:0 0;transform:scaleX(0.8390);-webkit-text-stroke:0.22px currentColor;">[4] subset_3_of_S2A_MSIL2A_20250822T082751_N0511_R021_T36RWV_20250822T121906</div><div class="t" style="left:82.5px;top:222.00px;font-size:16px;line-height:16px;color:#1a1a1a;font-weight:400;font-family:'Liberation Sans',sans-serif;transform-origin:0 0;transform:scaleX(0.8372);-webkit-text-stroke:0.22px currentColor;">[5] subset_4_of_S2B_MSIL2A_20250822T081609_N0511_R121_T36RWV_20250822T104558</div><div class="t" style="left:82.5px;top:244.00px;font-size:16px;line-height:16px;color:#1a1a1a;font-weight:400;font-family:'Liberation Sans',sans-serif;transform-origin:0 0;transform:scaleX(0.8398);-webkit-text-stroke:0.22px currentColor;">[6] subset_7_of_S2A_MSIL2A_20250822T082751_N0511_R021_T36RWU_20250822T121906</div><div class="t" style="left:82.5px;top:267.00px;font-size:16px;line-height:16px;color:#1a1a1a;font-weight:400;font-family:'Liberation Sans',sans-serif;transform-origin:0 0;transform:scaleX(0.8379);-webkit-text-stroke:0.22px currentColor;">[7] subset_8_of_S2B_MSIL2A_20250822T081609_N0511_R121_T36RWU_20250822T104558</div><div class="t" style="left:82.5px;top:289.00px;font-size:16px;line-height:16px;color:#1a1a1a;font-weight:400;font-family:'Liberation Sans',sans-serif;transform-origin:0 0;transform:scaleX(0.8371);-webkit-text-stroke:0.22px currentColor;">[8] subset_9_of_S2A_MSIL2A_20250822T082751_N0511_R021_T36RVV_20250822T121906</div><div class="t" style="left:82.5px;top:312.00px;font-size:16px;line-height:16px;color:#1a1a1a;font-weight:400;font-family:'Liberation Sans',sans-serif;transform-origin:0 0;transform:scaleX(0.8379);-webkit-text-stroke:0.22px currentColor;">[9] subset_10_of_S2A_MSIL2A_20250822T082751_N0511_R021_T36RVU_20250822T121906</div><div class="a" style="left:28px;top:330px;width:658px;height:24px;overflow:hidden"><div class="t" style="left:54.5px;top:4.00px;font-size:16px;line-height:16px;color:#1a1a1a;font-weight:400;font-family:'Liberation Sans',sans-serif;transform-origin:0 0;transform:scaleX(0.8379);-webkit-text-stroke:0.22px currentColor;">[10] subset_0_of_subset_10_of_S2A_MSIL2A_20250822T082751_N0511_R021_T36RVU_20250822T121906</div></div><div class="a" style="left:28px;top:1020px;width:658px;height:10px;background:#f2f2f2"></div><div class="a" style="left:28px;top:1020px;width:602px;height:10px;background:#dadada"></div><div class="a" style="left:686px;top:92px;width:1px;height:938px;background:#d8d8d8"></div><div class="a" style="left:692px;top:92px;width:1200px;height:36px;background:linear-gradient(#d9d9d9,#d2d2d2)"></div><div class="a" style="left:794px;top:92px;width:97px;height:13px;background:linear-gradient(#ececec,#e2e2e2)"></div><svg class="i" style="left:0;top:0" width="1920" height="140" viewBox="0 0 1920 140">
<rect x="703" y="101" width="11" height="4" fill="#2a2a50"/><rect x="707" y="101.5" width="6" height="2" fill="#c8c820"/>
<rect x="803" y="101" width="11" height="4" fill="#2a2a50"/><rect x="807" y="101.5" width="6" height="2" fill="#c8c820"/>
<path d="M1814 106.5 L1809 111.5 L1814 116.5 M1829 106.5 L1834 111.5 L1829 116.5" fill="none" stroke="#b4b4b4" stroke-width="1.2"/>
<path d="M1849 108.5 L1854.5 113.5 L1860 108.5" fill="none" stroke="#555" stroke-width="1.2"/>
<rect x="1872" y="104" width="11.5" height="11.5" fill="none" stroke="#555" stroke-width="1.2"/>
</svg><div class="a" style="left:693px;top:127px;width:1199px;height:903px;background:#e6c24e;overflow:hidden"><div class="a" style="left:3.5px;top:4px;width:1192px;height:895px;background:#333;filter:blur(2.4px)"></div></div><svg class="i" style="left:1560px;top:206px" width="59" height="748" viewBox="0 0 59 748">
<defs>
<filter id="sat" x="0" y="0" width="100%" height="100%">
<feTurbulence type="fractalNoise" baseFrequency="0.22 0.18" numOctaves="3" seed="3" result="n"/>
<feColorMatrix in="n" type="matrix" values="0 0 0 0 1  0 0 0 0 1  0 0 0 0 1  2.4 0 0 0 -1.15"/>
</filter>
<filter id="sat2" x="0" y="0" width="100%" height="100%">
<feTurbulence type="fractalNoise" baseFrequency="0.45 0.35" numOctaves="2" seed="11" result="n"/>
<feColorMatrix in="n" type="matrix" values="0 0 0 0 0  0 0 0 0 0  0 0 0 0 0  0 2.4 0 0 -1.4"/>
</filter>
<filter id="blob" x="0" y="0" width="100%" height="100%">
<feTurbulence type="fractalNoise" baseFrequency="0.06 0.03" numOctaves="2" seed="5" result="n"/>
<feColorMatrix in="n" type="matrix" values="0 0 0 0 1  0 0 0 0 1  0 0 0 0 1  3.5 0 0 0 -1.75"/>
</filter>
<filter id="bl6"><feGaussianBlur stdDeviation="5"/></filter>
<linearGradient id="satg" x1="0" y1="0" x2="0" y2="1">
<stop offset="0" stop-color="#bcbcbc"/><stop offset=".3" stop-color="#b6b6b6"/><stop offset=".47" stop-color="#b0b0b0"/>
<stop offset=".52" stop-color="#a6a6a6"/><stop offset=".66" stop-color="#a2a2a2"/><stop offset=".72" stop-color="#b4b4b4"/>
<stop offset=".88" stop-color="#bababa"/><stop offset="1" stop-color="#c0c0c0"/></linearGradient>
<clipPath id="satc"><rect width="59" height="748"/></clipPath>
</defs>
<g clip-path="url(#satc)">
<rect width="59" height="748" fill="url(#satg)"/>
<path d="M-5 270 Q30 220 70 200 L70 225 Q30 250 -5 300 Z" fill="#999" filter="url(#bl6)" opacity=".7"/><path d="M-5 400 Q30 370 70 360 L70 470 Q30 480 -5 500 Z" fill="#989898" filter="url(#bl6)" opacity=".85"/>
<path d="M-5 540 L70 480 L70 520 L-5 580 Z" fill="#cacaca" filter="url(#bl6)" opacity=".6"/><path d="M-5 520 Q20 700 70 740" stroke="#d8d8d8" stroke-width="6" fill="none" filter="url(#bl6)" opacity=".5"/>
<rect y="0" width="59" height="748" filter="url(#blob)" opacity=".3"/>
<rect width="59" height="748" filter="url(#sat)" opacity=".45"/>
<rect width="59" height="748" filter="url(#sat2)" opacity=".22"/>
<path d="M5 740 L40 700 M0 720 L30 690" stroke="#666" stroke-width="1.2" opacity=".25"/>
</g>
<rect x="0" y="0" width="1" height="748" fill="#d0d0d0"/>
</svg><div class="a" style="left:1892px;top:92px;width:28px;height:938px;background:#f2f2f2"></div><div class="a" style="left:1896px;top:247px;width:20px;height:1px;background:#d6d6d6"></div><svg class="i" style="left:0;top:0" width="1920" height="300" viewBox="0 0 1920 300">
<path d="M1897 113 L1901 107.5 H1915.5 L1911.5 113 Z" fill="#111"/>
<path d="M1897.5 110.5 L1901.5 104.5 H1915 L1911 110.5 Z" fill="#b8b8e8" stroke="#555" stroke-width=".8"/>
<path d="M1899 107.8 L1902.5 102.5 H1915 L1911.5 107.8 Z" fill="#fff" stroke="#7070c0" stroke-width="1"/>
<ellipse cx="1907" cy="105.2" rx="2.6" ry="1.5" fill="#f00"/>
<path d="M1898 277 L1901.5 272.5 H1915 L1911.5 277 Z" fill="#7a7abc"/>
<path d="M1898 273.5 L1901.5 269 H1915 L1911.5 273.5 Z" fill="#9a9ad6" stroke="#5a5a9a" stroke-width=".8"/>
<path d="M1898 270 L1901.5 265.5 H1915 L1911.5 270 Z" fill="#b4b4ea" stroke="#5a5a9a" stroke-width=".8"/>
</svg><div class="t" style="left:1852.09px;top:167.16px;font-size:16px;line-height:16px;color:#111;font-weight:400;font-family:'Liberation Sans',sans-serif;transform-origin:52.91px 7.24px;transform:rotate(90deg) scaleX(0.9449);">Mask Manager</div><div class="t" style="left:1851.19px;top:329.26px;font-size:16px;line-height:16px;color:#111;font-weight:400;font-family:'Liberation Sans',sans-serif;transform-origin:53.81px 7.24px;transform:rotate(90deg) scaleX(0.9013);">Layer Manager</div><div class="a" style="left:703px;top:104px;width:857px;height:926px;background:#f2f2f2;border:1px solid #555;border-bottom:none;box-shadow:0 0 10px 2px rgba(0,0,0,.28)"></div><div class="a" style="left:704px;top:105px;width:855px;height:1px;background:#fafafa"></div><div class="a" style="left:1558px;top:105px;width:1px;height:925px;background:#fafafa"></div><svg class="i" style="left:714px;top:114px" width="20" height="20" viewBox="0 0 20 20">
<rect x="0" y="0" width="20" height="20" fill="#0f3b55"/>
<circle cx="5.5" cy="5.5" r="3" fill="#e8eef2"/><circle cx="6.5" cy="5.5" r="1.6" fill="#0f3b55"/>
<text x="9" y="7.6" font-family="Liberation Sans" font-weight="700" font-size="5.5" fill="#c8d4dc" textLength="8.5" lengthAdjust="spacingAndGlyphs">esa</text>
<text x="3.2" y="17" font-family="Liberation Sans" font-weight="700" font-size="6.5" fill="#cfd9e0" textLength="13.5" lengthAdjust="spacingAndGlyphs">SNAP</text>
</svg><div class="t" style="left:754.7px;top:117.00px;font-size:16px;line-height:16px;color:#111;font-weight:400;font-family:'Liberation Sans',sans-serif;transform-origin:0 0;transform:scaleX(0.8533);-webkit-text-stroke:0.22px currentColor;">File</div><div class="t" style="left:797.2px;top:117.00px;font-size:16px;line-height:16px;color:#111;font-weight:400;font-family:'Liberation Sans',sans-serif;transform-origin:0 0;transform:scaleX(0.8634);-webkit-text-stroke:0.22px currentColor;">Graphs</div><div class="t" style="left:1030.8px;top:117.00px;font-size:16px;line-height:16px;color:#555;font-weight:400;font-family:'Liberation Sans',sans-serif;transform-origin:0 0;transform:scaleX(0.9178);-webkit-text-stroke:0.22px currentColor;">Graph Builder : graph4one.xml</div><svg class="i" style="left:0;top:0" width="1600" height="140" viewBox="0 0 1600 140"><path d="M1525 117 L1538 130 M1538 117 L1525 130" stroke="#222" stroke-width="1.4"/></svg><div class="a" style="left:711.5px;top:151.5px;width:840px;height:449px;background:#fff;border:1px solid #d4d4d4"></div><div class="a" style="left:1538px;top:152.5px;width:12.5px;height:435px;background:#f2f2f2"></div><div class="a" style="left:1538px;top:152.5px;width:12.5px;height:149px;background:#dadada"></div><div class="a" style="left:712.5px;top:586.7px;width:838px;height:13px;background:#f2f2f2"></div><div class="a" style="left:712.5px;top:586.7px;width:362.7px;height:12.5px;background:#dadada"></div><div class="a" style="left:712.5px;top:599px;width:838px;height:1.5px;background:#d0d0d0"></div><svg class="i" style="left:0;top:0" width="1600" height="600" viewBox="0 0 1600 600"><defs><linearGradient id="ng" x1="0" y1="0" x2="1" y2="1"><stop offset="0" stop-color="#7fd2f4"/><stop offset="1" stop-color="#7db6da"/></linearGradient><filter id="ns" x="-20%" y="-30%" width="140%" height="170%"><feGaussianBlur stdDeviation="1.4"/></filter></defs><path d="M791.8 401 L874.5006417167866 403.9641807066949" stroke="#ff0000" stroke-width="2.2"/><path d="M865.83 408.46 L875.5 404 L866.18 398.86" fill="none" stroke="#ff0000" stroke-width="2.2" stroke-linejoin="miter"/><path d="M971.25 403.5 L1043.5014876636822 407.4454737290748" stroke="#ff0000" stroke-width="2.2"/><path d="M1034.75 411.77 L1044.5 407.5 L1035.28 402.19" fill="none" stroke="#ff0000" stroke-width="2.2" stroke-linejoin="miter"/><path d="M1103 327.5 L1105.461269391918 391.00075031148486" stroke="#ff0000" stroke-width="2.2"/><path d="M1100.34 382.69 L1105.5 392 L1109.93 382.32" fill="none" stroke="#ff0000" stroke-width="2.2" stroke-linejoin="miter"/><path d="M1167.5 407 L1234.5 407.0" stroke="#ff0000" stroke-width="2.2"/><path d="M1226.00 411.80 L1235.5 407 L1226.00 402.20" fill="none" stroke="#ff0000" stroke-width="2.2" stroke-linejoin="miter"/><path d="M1332.7 407 L1399.4 407.0" stroke="#ff0000" stroke-width="2.2"/><path d="M1390.90 411.80 L1400.4 407 L1390.90 402.20" fill="none" stroke="#ff0000" stroke-width="2.2" stroke-linejoin="miter"/><path d="M1452 422.7 L1452.0 527.2" stroke="#ff0000" stroke-width="2.2"/><path d="M1447.20 518.70 L1452 528.2 L1456.80 518.70" fill="none" stroke="#ff0000" stroke-width="2.2" stroke-linejoin="miter"/><rect x="719.3" y="388.7" width="75.5" height="31.400000000000034" fill="#000" opacity=".32" filter="url(#ns)"/><rect x="717.0999999999999" y="386.0" width="73.9" height="29.800000000000033" fill="url(#ng)" stroke="#1c1cf0" stroke-width="1.7"/><rect x="878.5" y="391.75" width="95.75" height="30.5" fill="#000" opacity=".32" filter="url(#ns)"/><rect x="876.3" y="389.05" width="94.15" height="28.9" fill="url(#ng)" stroke="#1c1cf0" stroke-width="1.7"/><rect x="1047.5" y="395.5" width="123.0" height="30.5" fill="#000" opacity=".32" filter="url(#ns)"/><rect x="1045.3" y="392.8" width="121.4" height="28.9" fill="url(#ng)" stroke="#1c1cf0" stroke-width="1.7"/><rect x="1049.75" y="300.5" width="112.0" height="30.5" fill="#000" opacity=".32" filter="url(#ns)"/><rect x="1047.55" y="297.8" width="110.4" height="28.9" fill="url(#ng)" stroke="#1c1cf0" stroke-width="1.7"/><rect x="1238.5" y="395.3" width="97.20000000000005" height="30.899999999999977" fill="#000" opacity=".32" filter="url(#ns)"/><rect x="1236.3" y="392.6" width="95.60000000000005" height="29.299999999999976" fill="url(#ng)" stroke="#1c1cf0" stroke-width="1.7"/><rect x="1403.4" y="395.5" width="103.59999999999991" height="30.69999999999999" fill="#000" opacity=".32" filter="url(#ns)"/><rect x="1401.2" y="392.8" width="101.99999999999991" height="29.099999999999987" fill="url(#ng)" stroke="#1c1cf0" stroke-width="1.7"/><rect x="1381.2" y="531.7" width="146.89999999999986" height="30.699999999999932" fill="#000" opacity=".32" filter="url(#ns)"/><rect x="1379.0" y="529.0" width="145.29999999999987" height="29.09999999999993" fill="url(#ng)" stroke="#1c1cf0" stroke-width="1.7"/></svg><div class="t" style="left:728.75px;top:393.00px;font-size:13.5px;line-height:13.5px;color:#000;font-weight:700;font-family:'Liberation Sans',sans-serif;transform-origin:0 0;transform:scaleX(0.9754);-webkit-text-stroke:0.22px currentColor;">Read_1</div><div class="t" style="left:881.25px;top:396.00px;font-size:13.5px;line-height:13.5px;color:#000;font-weight:700;font-family:'Liberation Sans',sans-serif;transform-origin:0 0;transform:scaleX(1.0468);-webkit-text-stroke:0.22px currentColor;">Resample_1</div><div class="t" style="left:1050px;top:400.00px;font-size:13.5px;line-height:13.5px;color:#000;font-weight:700;font-family:'Liberation Sans',sans-serif;transform-origin:0 0;transform:scaleX(1.0470);-webkit-text-stroke:0.22px currentColor;">LandSeaMask_1</div><div class="t" style="left:1052.5px;top:305.00px;font-size:13.5px;line-height:13.5px;color:#000;font-weight:700;font-family:'Liberation Sans',sans-serif;transform-origin:0 0;transform:scaleX(1.0878);-webkit-text-stroke:0.22px currentColor;">Import_Vector</div><div class="t" style="left:1241.1px;top:400.00px;font-size:13.5px;line-height:13.5px;color:#000;font-weight:700;font-family:'Liberation Sans',sans-serif;transform-origin:0 0;transform:scaleX(1.0625);-webkit-text-stroke:0.22px currentColor;">CloudMask2</div><div class="t" style="left:1406.2px;top:400.00px;font-size:13.5px;line-height:13.5px;color:#000;font-weight:700;font-family:'Liberation Sans',sans-serif;transform-origin:0 0;transform:scaleX(1.0310);-webkit-text-stroke:0.22px currentColor;">BandMaths_1</div><div class="t" style="left:1383.3px;top:536.00px;font-size:13.5px;line-height:13.5px;color:#000;font-weight:700;font-family:'Liberation Sans',sans-serif;transform-origin:0 0;transform:scaleX(1.0443);-webkit-text-stroke:0.22px currentColor;">Write_BandMaths_1</div><svg class="i" style="left:0;top:0" width="1600" height="620" viewBox="0 0 1600 620"><path d="M717.5 607 L723 601.5 L728.5 607 M735.5 601.5 L741 607 L746.5 601.5" fill="none" stroke="#888" stroke-width="1.2"/></svg><div class="a" style="left:712px;top:612px;width:75.6px;height:3.5px;background:#3b7fc7"></div><div class="a" style="left:712px;top:615.5px;width:75.6px;height:35.5px;background:#dce4ec"></div><div class="a" style="left:711.5px;top:650px;width:840px;height:2px;background:#d6d6d6"></div><div class="t" style="left:727px;top:624.00px;font-size:16px;line-height:16px;color:#111;font-weight:400;font-family:'Liberation Sans',sans-serif;transform-origin:0 0;transform:scaleX(0.7993);-webkit-text-stroke:0.22px currentColor;">Read_1</div><div class="t" style="left:803px;top:624.00px;font-size:16px;line-height:16px;color:#111;font-weight:400;font-family:'Liberation Sans',sans-serif;transform-origin:0 0;transform:scaleX(0.8539);-webkit-text-stroke:0.22px currentColor;">Resample_1</div><div class="t" style="left:910.6px;top:624.00px;font-size:16px;line-height:16px;color:#111;font-weight:400;font-family:'Liberation Sans',sans-serif;transform-origin:0 0;transform:scaleX(0.9231);-webkit-text-stroke:0.22px currentColor;">CloudMask2</div><div class="t" style="left:1023px;top:624.00px;font-size:16px;line-height:16px;color:#111;font-weight:400;font-family:'Liberation Sans',sans-serif;transform-origin:0 0;transform:scaleX(0.8913);-webkit-text-stroke:0.22px currentColor;">BandMaths_1</div><div class="t" style="left:1141.8px;top:624.00px;font-size:16px;line-height:16px;color:#111;font-weight:400;font-family:'Liberation Sans',sans-serif;transform-origin:0 0;transform:scaleX(0.8931);-webkit-text-stroke:0.22px currentColor;">Write_BandMaths_1</div><div class="a" style="left:711.5px;top:651px;width:840px;height:295.5px;border:1px solid #d6d6d6;border-top:none"></div><div class="a" style="left:715.6px;top:662px;width:832.2px;height:74.2px;border:1px solid #d4d4d4;border-radius:2px"></div><div class="a" style="left:719px;top:656px;width:109px;height:12px;background:#f2f2f2"></div><div class="t" style="left:723px;top:655.00px;font-size:16px;line-height:16px;color:#111;font-weight:400;font-family:'Liberation Sans',sans-serif;transform-origin:0 0;transform:scaleX(0.9068);-webkit-text-stroke:0.22px currentColor;">Source Product</div><div class="t" style="left:723px;top:681.00px;font-size:16px;line-height:16px;color:#111;font-weight:400;font-family:'Liberation Sans',sans-serif;transform-origin:0 0;transform:scaleX(0.8700);-webkit-text-stroke:0.22px currentColor;">Name:</div><div class="a" style="left:723.5px;top:702.4px;width:780px;height:26px;background:#fff;border:1px solid #d2d2d2;border-radius:3px"></div><div class="t" style="left:732.3px;top:709.00px;font-size:16px;line-height:16px;color:#111;font-weight:400;font-family:'Liberation Sans',sans-serif;transform-origin:0 0;transform:scaleX(0.8330);-webkit-text-stroke:0.22px currentColor;">[1] subset_0_of_S2B_MSIL2A_20250822T081609_N0511_R121_T36RXV_20250822T104558</div><div class="a" style="left:1507.9px;top:702.4px;width:31.6px;height:26px;background:#fff;border:1px solid #d2d2d2;border-radius:3px"></div><div class="t" style="left:749.3px;top:758.00px;font-size:16px;line-height:16px;color:#111;font-weight:400;font-family:'Liberation Sans',sans-serif;transform-origin:0 0;transform:scaleX(0.8997);-webkit-text-stroke:0.22px currentColor;">Data Format:</div><div class="a" style="left:883.4px;top:752.3px;width:666px;height:26px;background:#fff;border:1px solid #d2d2d2;border-radius:3px"></div><div class="t" style="left:891.3px;top:758.00px;font-size:16px;line-height:16px;color:#111;font-weight:400;font-family:'Liberation Sans',sans-serif;transform-origin:0 0;transform:scaleX(0.9373);-webkit-text-stroke:0.22px currentColor;">Any Format</div><svg class="i" style="left:0;top:0" width="1600" height="800" viewBox="0 0 1600 800"><path d="M1484.5 712.5 L1491 719 L1497.5 712.5" fill="none" stroke="#555" stroke-width="1.3"/><circle cx="1520.2" cy="719.5" r=".9" fill="#111"/><circle cx="1523.7" cy="719.5" r=".9" fill="#111"/><circle cx="1527.2" cy="719.5" r=".9" fill="#111"/><path d="M1531.5 764 L1538 770.5 L1544.5 764" fill="none" stroke="#555" stroke-width="1.3"/></svg><div class="a" style="left:713.7px;top:792.6px;width:156px;height:26.5px;background:#fff;border:1px solid #d2d2d2;border-radius:3px"></div><div class="t" style="left:732px;top:798.00px;font-size:16px;line-height:16px;color:#111;font-weight:400;font-family:'Liberation Sans',sans-serif;transform-origin:0 0;transform:scaleX(0.9355);-webkit-text-stroke:0.22px currentColor;">Advanced options</div><div class="t" style="left:711.5px;top:955.00px;font-size:16px;line-height:16px;color:#ff1010;font-weight:400;font-family:'Liberation Sans',sans-serif;transform-origin:0 0;transform:scaleX(0.9384);-webkit-text-stroke:0.22px currentColor;">Error: SPI not found for operator 'VectorImport'</div><div class="a" style="left:767.2px;top:977.5px;width:101.39999999999998px;height:35.1px;background:#f2f2f2;border:1px solid #d2d2d2;border-radius:4px"></div><div class="t" style="left:818px;top:988.00px;font-size:16px;line-height:16px;color:#111;font-weight:400;font-family:'Liberation Sans',sans-serif;transform-origin:0 0;transform:scaleX(0.8990);-webkit-text-stroke:0.22px currentColor;">Load</div><div class="a" style="left:869.7px;top:977.5px;width:102.5px;height:35.1px;background:#f2f2f2;border:1px solid #d2d2d2;border-radius:4px"></div><div class="t" style="left:920.6px;top:988.00px;font-size:16px;line-height:16px;color:#111;font-weight:400;font-family:'Liberation Sans',sans-serif;transform-origin:0 0;transform:scaleX(0.8736);-webkit-text-stroke:0.22px currentColor;">Clear</div><div class="a" style="left:973.6px;top:977.5px;width:100.89999999999998px;height:35.1px;background:#f2f2f2;border:1px solid #d2d2d2;border-radius:4px"></div><div class="t" style="left:1024.5px;top:988.00px;font-size:16px;line-height:16px;color:#111;font-weight:400;font-family:'Liberation Sans',sans-serif;transform-origin:0 0;transform:scaleX(0.9616);-webkit-text-stroke:0.22px currentColor;">Note</div><div class="a" style="left:1076px;top:977.5px;width:97.90000000000009px;height:35.1px;background:#f2f2f2;border:1px solid #d2d2d2;border-radius:4px"></div><div class="t" style="left:1127px;top:988.00px;font-size:16px;line-height:16px;color:#111;font-weight:400;font-family:'Liberation Sans',sans-serif;transform-origin:0 0;transform:scaleX(0.8062);-webkit-text-stroke:0.22px currentColor;">Save</div><div class="a" style="left:1175.8px;top:977.5px;width:99.90000000000009px;height:35.1px;background:#f2f2f2;border:1px solid #d2d2d2;border-radius:4px"></div><div class="t" style="left:1226.6px;top:988.00px;font-size:16px;line-height:16px;color:#111;font-weight:400;font-family:'Liberation Sans',sans-serif;transform-origin:0 0;transform:scaleX(0.9238);-webkit-text-stroke:0.22px currentColor;">Help</div><div class="a" style="left:1277.4px;top:977.5px;width:120.5px;height:35.1px;background:#f2f2f2;border:1px solid #d2d2d2;border-radius:4px"></div><div class="t" style="left:1328px;top:988.00px;font-size:16px;line-height:16px;color:#111;font-weight:400;font-family:'Liberation Sans',sans-serif;transform-origin:0 0;transform:scaleX(0.9251);-webkit-text-stroke:0.22px currentColor;">Validate</div><div class="a" style="left:1399.8px;top:977.5px;width:94.40000000000009px;height:35.1px;background:#f2f2f2;border:1px solid #d2d2d2;border-radius:4px"></div><div class="t" style="left:1450.6px;top:988.00px;font-size:16px;line-height:16px;color:#111;font-weight:400;font-family:'Liberation Sans',sans-serif;transform-origin:0 0;transform:scaleX(0.8754);-webkit-text-stroke:0.22px currentColor;">Run</div><svg class="i" style="left:0;top:0" width="1600" height="1030" viewBox="0 0 1600 1030"><defs><linearGradient id="fold" x1="0" y1="0" x2="0" y2="1"><stop offset="0" stop-color="#a8cdf0"/><stop offset="1" stop-color="#4a86c8"/></linearGradient><linearGradient id="broom" x1="0" y1="0" x2="1" y2="1"><stop offset="0" stop-color="#fff27a"/><stop offset="1" stop-color="#d8b000"/></linearGradient><radialGradient id="help" cx=".4" cy=".3" r=".8"><stop offset="0" stop-color="#c6daf4"/><stop offset=".6" stop-color="#5a8ad0"/><stop offset="1" stop-color="#2a5aa8"/></radialGradient><linearGradient id="val" x1="0" y1="0" x2="0" y2="1"><stop offset="0" stop-color="#6aa8e8"/><stop offset="1" stop-color="#2a70c8"/></linearGradient></defs><rect x="787" y="983" width="14" height="19" fill="#9a9a9a" stroke="#666" stroke-width=".8"/><path d="M797 980.8 H805 L808.5 984.3 V995 H797 Z" fill="#fff" stroke="#555" stroke-width=".9"/><path d="M799 985 H805 M799 987.5 H805" stroke="#999" stroke-width=".8"/><path d="M786.5 990 H810.5 L811 1005.5 H787 Z" fill="url(#fold)" stroke="#3a6ab0" stroke-width="1"/><path d="M888 982 Q891 979 894 982 L898 988" stroke="#b0782a" stroke-width="3.5" stroke-linecap="round" fill="none"/><path d="M893.5 988 L899 985 L901 989 L896 992 Z" fill="#e02020"/><path d="M895 991 L901 987.5 L914 998 Q912 1005 904 1008 Z" fill="url(#broom)" stroke="#b89000" stroke-width=".8"/><ellipse cx="907" cy="1008" rx="6" ry="1.5" fill="#000" opacity=".15"/><rect x="993" y="982" width="20.5" height="23.5" fill="#fafafa" stroke="#888" stroke-width="1"/><path d="M994 981.5 H1013" stroke="#d8b030" stroke-width="2.2" stroke-dasharray="1.5 1"/><path d="M996 988 H1010 M996 992 H1010 M996 996 H1010 M996 1000 H1006" stroke="#ccc" stroke-width=".8"/><path d="M1016.5 985 L1003 1000.5" stroke="#c08a3a" stroke-width="3.2" stroke-linecap="round"/><path d="M1003.5 999.5 L1001.5 1002.5 L1004.5 1001" fill="#333" stroke="#333" stroke-width="1"/><path d="M1094.8 996 L1098.5 987.5 H1117.5 L1121 996 V1007 H1094.8 Z" fill="#f4f4f4" stroke="#666" stroke-width="1.1"/><rect x="1097.5" y="999" width="21" height="5.5" fill="#fff" stroke="#777" stroke-width=".9"/><rect x="1113.5" y="999.5" width="1.5" height="4.5" fill="#333"/><path d="M1096 986 Q1096 980.5 1103 980.5 Q1107 981 1107 986 V989.5 H1111 L1104 996.5 L1097.5 989.5 H1101 V987 Q1101 985 1098.5 985.5 Z" fill="#4a8ad0" stroke="#2a6ab0" stroke-width=".8"/><circle cx="1207.5" cy="994.2" r="12" fill="url(#help)" stroke="#3a64a8" stroke-width="1"/><circle cx="1207.5" cy="994.2" r="10" fill="none" stroke="#e8f0fa" stroke-width="1" opacity=".8"/><text x="1207.5" y="1000.5" font-family="Liberation Sans" font-weight="700" font-size="16" fill="#fff" text-anchor="middle">?</text><path d="M1299 993 Q1299 984 1310 984 L1314 984 V980.5 L1320 986.5 L1314 992.5 V989 H1310 Q1304 989 1304 993 Z" fill="url(#val)" stroke="#2a64b0" stroke-width=".8"/><path d="M1319 995 Q1319 1004 1308 1004 L1304 1004 V1007.5 L1298 1001.5 L1304 995.5 V999 H1308 Q1314 999 1314 995 Z" fill="url(#val)" stroke="#2a64b0" stroke-width=".8"/><path d="M1422.5 981.5 V1005.5 L1441.5 993.5 Z" fill="#fafafa" stroke="#666" stroke-width="1.3" stroke-linejoin="round"/></svg><div class="a" style="left:0px;top:1030px;width:1920px;height:50px;background:#444444"></div><svg class="i" style="left:0;top:0" width="1920" height="1080" viewBox="0 0 1920 1080"><path d="M20 1047.3 L28.6 1046.1 V1054.4 H20 Z M29.8 1045.9 L40 1044.5 V1054.4 H29.8 Z M20 1055.6 H28.6 V1063.9 L20 1062.7 Z M29.8 1055.6 H40 V1065.5 L29.8 1064.1 Z" fill="#fff"/><circle cx="92" cy="1052" r="8.6" fill="none" stroke="#fff" stroke-width="2"/><path d="M85.8 1058.2 L77.5 1066.5" stroke="#fff" stroke-width="2.2" stroke-linecap="round"/><path d="M140.5 1045.8 H153.5 M140.5 1064.2 H153.5" stroke="#fff" stroke-width="1.4"/><rect x="141.2" y="1049.5" width="11.5" height="11" fill="none" stroke="#fff" stroke-width="1.4"/><path d="M158.8 1045 V1065" stroke="#fff" stroke-width="1.2"/><rect x="157.3" y="1052.5" width="3" height="4" fill="#fff"/><defs><radialGradient id="ff" cx=".6" cy=".25" r=".8"><stop offset="0" stop-color="#ffe33a"/><stop offset=".4" stop-color="#ff8a1a"/><stop offset=".8" stop-color="#f0385a"/><stop offset="1" stop-color="#c01d6e"/></radialGradient><linearGradient id="cp" x1="0" y1="0" x2="1" y2="1"><stop offset="0" stop-color="#2b9af0"/><stop offset=".35" stop-color="#32d36a"/><stop offset=".6" stop-color="#f6c43a"/><stop offset="1" stop-color="#e048c8"/></linearGradient><linearGradient id="vs" x1="0" y1="0" x2="1" y2="0"><stop offset="0" stop-color="#1180d0"/><stop offset="1" stop-color="#2aa8f0"/></linearGradient></defs><circle cx="214" cy="1055.5" r="13" fill="url(#ff)"/><path d="M216 1041 Q226 1046 227 1052 L221 1047 Z" fill="#ffd430"/><circle cx="212.5" cy="1056" r="6" fill="#7b3fd0"/><path d="M204 1050 Q210 1046 218 1050 L213 1053 Z" fill="#ff9a20"/><path d="M266 1044 Q270 1041 276 1042 L285 1042 Q290 1044 290 1050 L287 1062 Q285 1067 280 1067 L270 1067 Q263 1066 262 1061 L263 1050 Q263 1046 266 1044 Z" fill="url(#cp)"/><path d="M274 1046 L280 1046 L276 1064 L270 1064 Z" fill="#444" opacity=".55"/><rect x="340.30" y="1045.00" width="8" height="20" rx="4" transform="rotate(30 344.30 1055.00)" fill="none" stroke="#fff" stroke-width="1.7"/><rect x="337.15" y="1050.46" width="8" height="20" rx="4" transform="rotate(90 341.15 1060.46)" fill="none" stroke="#fff" stroke-width="1.7"/><rect x="330.85" y="1050.46" width="8" height="20" rx="4" transform="rotate(150 334.85 1060.46)" fill="none" stroke="#fff" stroke-width="1.7"/><rect x="327.70" y="1045.00" width="8" height="20" rx="4" transform="rotate(210 331.70 1055.00)" fill="none" stroke="#fff" stroke-width="1.7"/><rect x="330.85" y="1039.54" width="8" height="20" rx="4" transform="rotate(270 334.85 1049.54)" fill="none" stroke="#fff" stroke-width="1.7"/><rect x="337.15" y="1039.54" width="8" height="20" rx="4" transform="rotate(330 341.15 1049.54)" fill="none" stroke="#fff" stroke-width="1.7"/><polygon points="399.8,1040 413.3,1047.5 413.3,1062.5 399.8,1070 386.3,1062.5 386.3,1047.5" fill="#1a6fd8"/><circle cx="399.8" cy="1055" r="8.5" fill="#fff"/><path d="M396 1048 Q401 1050 399 1055 Q396 1058 402 1062 M404 1050 Q407 1054 404 1058" stroke="#1a6fd8" stroke-width="2.2" fill="none"/><path d="M447.5 1045 H456 L458 1047 H475.8 V1066 H447.5 Z" fill="#f5c342"/><rect x="447.5" y="1049" width="28.3" height="17" fill="#ffd964"/><path d="M454 1066 V1058 H469 V1066 H465 V1062 H458 V1066 Z" fill="#2a8ce0"/><rect x="513" y="1041" width="25.3" height="27" rx="1.5" fill="#2b6fd6"/><rect x="513" y="1050" width="25.3" height="9" fill="#185abd"/><rect x="513" y="1059" width="25.3" height="9" fill="#103f91"/><rect x="508.7" y="1048" width="15" height="15" rx="1.5" fill="#185abd"/><text x="516.2" y="1059.8" font-family="Liberation Sans" font-weight="700" font-size="10.5" fill="#fff" text-anchor="middle">W</text><rect x="572.8" y="1042" width="26.4" height="26" rx="3" fill="#2a8ce8"/><path d="M574 1067 L586 1054 L597 1067 Z" fill="#57c0f8"/><path d="M580 1067 L590 1058 L599 1067 Z" fill="#7a5ad8" opacity=".8"/><circle cx="592.5" cy="1047" r="2.2" fill="#fff"/><rect x="633" y="1040" width="29.5" height="30" rx="4" fill="#000"/><path d="M647.7 1043 V1067 M639 1047 L647.7 1055 L639 1063 Z M656.5 1047 L647.7 1055 L656.5 1063 Z" stroke="#20c0d0" fill="#1aa8c0" stroke-width="1.2"/><defs><radialGradient id="sn" cx=".7" cy=".75" r=".6"><stop offset="0" stop-color="#6ab0e0"/><stop offset=".5" stop-color="#2a6a50"/><stop offset="1" stop-color="#1a3050"/></radialGradient></defs><rect x="695" y="1040" width="30" height="30" fill="url(#sn)"/><text x="710" y="1048.5" font-family="Liberation Sans" font-weight="700" font-size="8.5" fill="#fff" text-anchor="middle">SNAP</text><circle cx="716" cy="1062" r="8" fill="#5aa0d0" opacity=".8"/><path d="M779 1040 L787.5 1044 V1066 L779 1070 L763 1058 L759 1061 L756.7 1059.5 V1050.5 L759 1049 L763 1052 Z" fill="url(#vs)"/><path d="M779 1047 V1063 L769 1055 Z" fill="#444"/><path d="M759 1049 L776 1063 M759 1061 L776 1047" stroke="#0a70c0" stroke-width="2.5"/><path d="M829 1041 L845 1046 L838 1067 L820 1062 Z" fill="#b8e0f0"/><path d="M829 1041 L845 1046 L843 1050 L828 1045 Z" fill="#e0f0f8"/><path d="M822 1058 L830 1050 L836 1066 Z" fill="#3a9ac0" opacity=".6"/><path d="M845 1046 L846 1062 L838 1067" stroke="#c08a30" stroke-width="1.2" fill="none"/><rect x="886" y="1040.5" width="24" height="28" rx="1.5" fill="#21a366"/><rect x="886" y="1050" width="24" height="9" fill="#107c41"/><rect x="886" y="1059" width="24" height="9.5" fill="#185c37"/><rect x="898" y="1040.5" width="12" height="9.5" fill="#33c481"/><rect x="880.7" y="1048" width="15" height="15" rx="1.5" fill="#107c41"/><text x="888.2" y="1059.8" font-family="Liberation Sans" font-weight="700" font-size="10.5" fill="#fff" text-anchor="middle">X</text><circle cx="957" cy="1054" r="10.5" fill="none" stroke="#8ab832" stroke-width="5"/><path d="M952 1052 L970 1068" stroke="#6aa83a" stroke-width="4.5" stroke-linecap="round"/><path d="M952 1051 L957 1056" stroke="#ff8a1a" stroke-width="4.5" stroke-linecap="round"/><rect x="189" y="1077" width="51" height="3" fill="#b4b4b4"/><rect x="251" y="1077" width="51" height="3" fill="#b4b4b4"/><rect x="313" y="1077" width="51" height="3" fill="#b4b4b4"/><rect x="375" y="1077" width="51" height="3" fill="#b4b4b4"/><rect x="437" y="1077" width="51" height="3" fill="#b4b4b4"/><rect x="499" y="1077" width="51" height="3" fill="#b4b4b4"/><rect x="561" y="1077" width="51" height="3" fill="#b4b4b4"/><rect x="623" y="1077" width="51" height="3" fill="#b4b4b4"/><rect x="685" y="1077" width="55" height="3" fill="#b4b4b4"/><rect x="747" y="1077" width="51" height="3" fill="#b4b4b4"/><rect x="809" y="1077" width="51" height="3" fill="#b4b4b4"/><rect x="871" y="1077" width="51" height="3" fill="#b4b4b4"/><rect x="933" y="1077" width="51" height="3" fill="#b4b4b4"/><path d="M1612 1059 L1620 1051 L1628 1059" fill="none" stroke="#fff" stroke-width="1.4"/><path d="M1643 1062 Q1643 1050 1656 1048 M1646.5 1062 Q1647 1053 1656.5 1051.5 M1650 1062 Q1650.5 1056 1656.5 1055" fill="none" stroke="#fff" stroke-width="1.3"/><circle cx="1656" cy="1061" r="1.5" fill="#fff"/><rect x="1672.5" y="1051" width="16" height="9.5" fill="none" stroke="#fff" stroke-width="1.3"/><rect x="1674.5" y="1053" width="12" height="5.5" fill="#fff"/><rect x="1688.5" y="1053.5" width="1.5" height="4.5" fill="#fff"/><path d="M1671 1048 V1052 M1673.5 1048 V1052 M1670 1051.5 H1675 V1054 Q1672.3 1056 1670 1054 Z" stroke="#fff" stroke-width="1" fill="none"/><path d="M1700.5 1052.5 H1704 L1708 1049 V1061 L1704 1057.5 H1700.5 Z" fill="none" stroke="#fff" stroke-width="1.2"/><path d="M1711 1052.5 L1717 1058.5 M1717 1052.5 L1711 1058.5" stroke="#fff" stroke-width="1.2"/><path d="M1868.6 1044.5 H1889.3 V1060 H1875 L1871 1063.5 V1060 H1868.6 Z" fill="#fff"/><path d="M1872 1049 H1886 M1872 1052.5 H1886 M1872 1056 H1882" stroke="#444" stroke-width="1"/><circle cx="1888.3" cy="1064" r="9.8" fill="#444" stroke="#999" stroke-width="1.2"/><path d="M1913.5 1030 V1080" stroke="#777" stroke-width="1"/></svg><div class="t" style="left:1733.5px;top:1047.00px;font-size:16px;line-height:16px;color:#fff;font-weight:400;font-family:'Liberation Sans',sans-serif;transform-origin:0 0;transform:scaleX(0.8133);-webkit-text-stroke:0.22px currentColor;">ENG</div><div class="t" style="left:1786px;top:1036.00px;font-size:16px;line-height:16px;color:#fff;font-weight:400;font-family:'Liberation Sans',sans-serif;transform-origin:0 0;transform:scaleX(0.8960);-webkit-text-stroke:0.22px currentColor;">7:20 AM</div><div class="t" style="left:1778.6px;top:1059.00px;font-size:16px;line-height:16px;color:#fff;font-weight:400;font-family:'Liberation Sans',sans-serif;transform-origin:0 0;transform:scaleX(0.9468);-webkit-text-stroke:0.22px currentColor;">3/15/2026</div><div class="t" style="left:1884px;top:1059.00px;font-size:13px;line-height:13px;color:#fff;font-weight:700;font-family:'Liberation Sans',sans-serif;-webkit-text-stroke:0.22px currentColor;">7</div></body></html>
